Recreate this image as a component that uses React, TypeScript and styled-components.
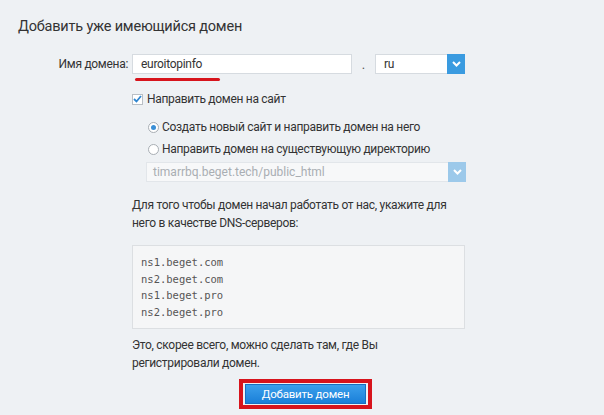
import React from "react";
import styled, { createGlobalStyle } from "styled-components";

const FONT = `Roboto, "Noto Sans", sans-serif`;

const Global = createGlobalStyle`
  html, body { margin: 0; padding: 0; }
  body {
    background: #eef1f4;
    font-family: ${FONT};
    color: #333;
    width: 604px;
    height: 415px;
    overflow: hidden;
  }
`;

const Page = styled.div`
  padding: 15px 18px 0 18px;
`;

const Title = styled.h1`
  margin: 0;
  font-size: 14.5px;
  letter-spacing: -0.2px;
  font-weight: 400;
  line-height: 24px;
  color: #333;
`;

const FieldRow = styled.div`
  display: flex;
  align-items: center;
  margin-top: 15px;
  height: 20px;
`;

const Label = styled.label`
  width: 110px;
  margin-right: 4px;
  text-align: right;
  font-size: 12px;
  letter-spacing: -0.3px;
  color: #333;
`;

const TextInput = styled.div`
  box-sizing: border-box;
  width: 220px;
  height: 20px;
  background: #fff;
  border: 1px solid #d6dbe0;
  position: relative;
  font-size: 12px;
  letter-spacing: -0.3px;
  line-height: 18px;
  padding-left: 8px;
  color: #333;
`;

const Underline = styled.span`
  position: absolute;
  left: 2px;
  top: 23px;
  width: 85px;
  height: 3px;
  border-radius: 2px;
  background: #d7141c;
`;

const Dot = styled.span`
  width: 23px;
  text-align: center;
  font-size: 13px;
  color: #555;
`;

const Select = styled.div<{ $width: number; $disabled?: boolean }>`
  box-sizing: border-box;
  display: flex;
  width: ${(p) => p.$width}px;
  height: 20px;
  background: ${(p) => (p.$disabled ? "#f7f8f9" : "#fff")};
  border: 1px solid ${(p) => (p.$disabled ? "#e2e6ea" : "#d6dbe0")};
  font-size: 12px;
  letter-spacing: ${(p) => (p.$disabled ? "0" : "-0.3px")};
  line-height: 18px;
  color: ${(p) => (p.$disabled ? "#a9aeb3" : "#333")};
`;

const SelectValue = styled.span<{ $pad: number }>`
  flex: 1;
  padding-left: ${(p) => p.$pad}px;
`;

const SelectButton = styled.span<{ $disabled?: boolean }>`
  width: 18px;
  margin: -1px -1px -1px 0;
  display: flex;
  align-items: center;
  justify-content: center;
  background: ${(p) => (p.$disabled ? "#9cc9ea" : "#3a9be0")};
`;

const Body = styled.div`
  margin-left: 114px;
  width: 334px;
  font-size: 12px;
  letter-spacing: -0.3px;
  color: #333;
`;

const CheckRow = styled.div`
  display: flex;
  align-items: center;
  height: 18px;
  margin-top: 16px;
  white-space: nowrap;
`;

const Checkbox = styled.span`
  box-sizing: border-box;
  width: 11px;
  height: 11px;
  background: #fff;
  border: 1px solid #b9bfc5;
  margin-right: 4px;
  display: flex;
  align-items: center;
  justify-content: center;
`;

const Radios = styled.div`
  margin-left: 16px;
  margin-top: 10px;
  display: flex;
  flex-direction: column;
  gap: 4px;
`;

const RadioRow = styled.div`
  display: flex;
  align-items: center;
  height: 18px;
  white-space: nowrap;
`;

const Radio = styled.span<{ $checked?: boolean }>`
  box-sizing: border-box;
  flex: none;
  width: 11px;
  height: 11px;
  border-radius: 50%;
  background: #fff;
  border: 1px solid #a8aeb4;
  margin-right: 3px;
  display: flex;
  align-items: center;
  justify-content: center;
  &::after {
    content: "";
    width: 5px;
    height: 5px;
    border-radius: 50%;
    background: ${(p) => (p.$checked ? "#3a8fd6" : "transparent")};
  }
`;

const DirSelect = styled.div`
  margin-left: 14px;
  margin-top: 4px;
`;

const Para = styled.p`
  margin: 14px 0 0 0;
  line-height: 18px;
  white-space: nowrap;
`;

const Pre = styled.pre`
  box-sizing: border-box;
  margin: 13px 0 0 0;
  width: 333px;
  padding: 8px 8px 8px 8px;
  background: #f5f6f7;
  border: 1px solid #dcdfe2;
  font-family: "DejaVu Sans Mono", "Liberation Mono", monospace;
  font-size: 10.5px;
  letter-spacing: 0;
  line-height: 16.5px;
  color: #555;
`;

const Note = styled.p`
  margin: 8px 0 0 0;
  line-height: 17.5px;
  white-space: nowrap;
`;

const ButtonWrap = styled.div`
  display: flex;
  margin-top: 7px;
  padding-left: 107px;
`;

const Highlight = styled.div`
  box-sizing: border-box;
  padding: 1px 2px;
  border: 4px solid #d7141c;
`;

const Button = styled.button`
  box-sizing: border-box;
  width: 121px;
  height: 20px;
  border: 1px solid #1a6fbf;
  background: linear-gradient(#3ca0ec, #1a7fd8);
  color: #fff;
  font-family: ${FONT};
  font-size: 11.5px;
  letter-spacing: -0.2px;
  line-height: 17px;
  padding: 0;
  display: block;
`;

const Chevron = () => (
  <svg width="9" height="6" viewBox="0 0 9 6">
    <path d="M1 1 L4.5 4.5 L8 1" stroke="#fff" strokeWidth="2" fill="none" />
  </svg>
);

const Check = () => (
  <svg width="9" height="8" viewBox="0 0 9 8">
    <path d="M1 4 L3.5 6.5 L8 1" stroke="#2f86d0" strokeWidth="1.8" fill="none" />
  </svg>
);

export default function App() {
  return (
    <>
      <Global />
      <Page>
        <Title>Добавить уже имеющийся домен</Title>
        <FieldRow>
          <Label>Имя домена:</Label>
          <TextInput>
            euroitopinfo
            <Underline />
          </TextInput>
          <Dot>.</Dot>
          <Select $width={90}>
            <SelectValue $pad={8}>ru</SelectValue>
            <SelectButton>
              <Chevron />
            </SelectButton>
          </Select>
        </FieldRow>
        <Body>
          <CheckRow>
            <Checkbox>
              <Check />
            </Checkbox>
            Направить домен на сайт
          </CheckRow>
          <Radios>
            <RadioRow>
              <Radio $checked />
              Создать новый сайт и направить домен на него
            </RadioRow>
            <RadioRow>
              <Radio />
              Направить домен на существующую директорию
            </RadioRow>
          </Radios>
          <DirSelect>
            <Select $width={320} $disabled>
              <SelectValue $pad={6}>timarrbq.beget.tech/public_html</SelectValue>
              <SelectButton $disabled>
                <Chevron />
              </SelectButton>
            </Select>
          </DirSelect>
          <Para>
            Для того чтобы домен начал работать от нас, укажите для
            <br />
            него в качестве DNS-серверов:
          </Para>
          <Pre>
            {"ns1.beget.com\nns2.beget.com\nns1.beget.pro\nns2.beget.pro"}
          </Pre>
          <Note>
            Это, скорее всего, можно сделать там, где Вы
            <br />
            регистрировали домен.
          </Note>
          <ButtonWrap>
            <Highlight>
              <Button>Добавить домен</Button>
            </Highlight>
          </ButtonWrap>
        </Body>
      </Page>
    </>
  );
}
